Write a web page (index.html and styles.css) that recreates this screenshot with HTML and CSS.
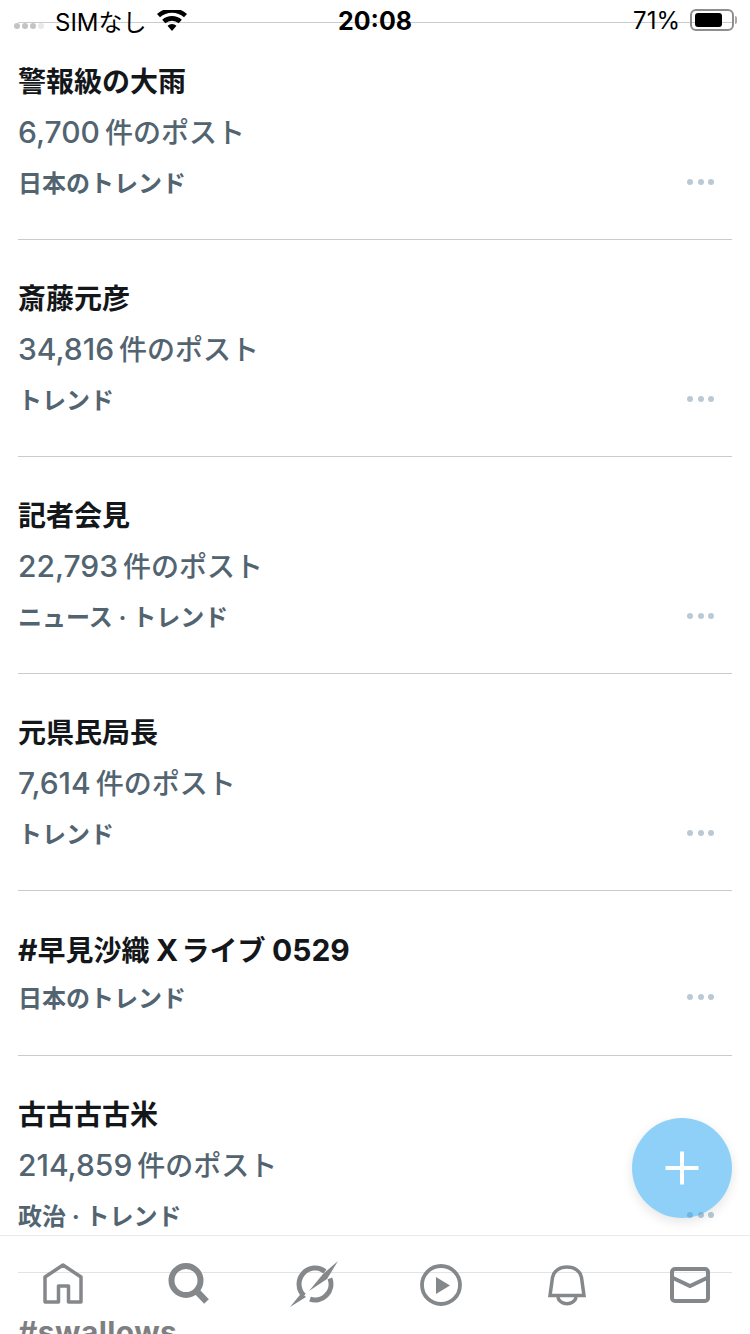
FILE: index.html
```html
<!DOCTYPE html>
<html lang="ja">
<head>
  <meta charset="UTF-8">
  <meta name="viewport" content="width=device-width, initial-scale=1.0">
  <title>トレンド</title>
  <link rel="stylesheet" href="styles.css">
</head>
<body>
  <div class="phone">
    <ul class="trends">
      <li class="trend">
        <div class="trend-title">警報級の大雨</div>
        <div class="trend-count"><span class="num">6,700</span>件のポスト</div>
        <div class="trend-foot"><span class="trend-cat">日本のトレンド</span><span class="dots"><i></i><i></i><i></i></span></div>
      </li>
      <li class="trend">
        <div class="trend-title">斎藤元彦</div>
        <div class="trend-count"><span class="num">34,816</span>件のポスト</div>
        <div class="trend-foot"><span class="trend-cat">トレンド</span><span class="dots"><i></i><i></i><i></i></span></div>
      </li>
      <li class="trend">
        <div class="trend-title">記者会見</div>
        <div class="trend-count"><span class="num">22,793</span>件のポスト</div>
        <div class="trend-foot"><span class="trend-cat">ニュース · トレンド</span><span class="dots"><i></i><i></i><i></i></span></div>
      </li>
      <li class="trend">
        <div class="trend-title">元県民局長</div>
        <div class="trend-count"><span class="num">7,614</span>件のポスト</div>
        <div class="trend-foot"><span class="trend-cat">トレンド</span><span class="dots"><i></i><i></i><i></i></span></div>
      </li>
      <li class="trend trend-short">
        <div class="trend-title"><span class="latin">#</span>早見沙織 <span class="latin tight">X </span>ライブ <span class="latin">0529</span></div>
        <div class="trend-foot"><span class="trend-cat">日本のトレンド</span><span class="dots"><i></i><i></i><i></i></span></div>
      </li>
      <li class="trend">
        <div class="trend-title">古古古古米</div>
        <div class="trend-count"><span class="num">214,859</span>件のポスト</div>
        <div class="trend-foot"><span class="trend-cat">政治 · トレンド</span><span class="dots"><i></i><i></i><i></i></span></div>
      </li>
      <li class="trend">
        <div class="trend-title"><span class="latin wide">#swallows</span></div>
      </li>
    </ul>

    <!-- status bar sits over the list, the divider shows through -->
    <div class="status-bar">
      <div class="status-left">
        <span class="signal"><i></i><i></i><i></i><i></i></span>
        <span class="carrier">SIMなし</span>
        <svg class="wifi" width="30" height="22" viewBox="0 0 30 22"><path d="M15 21 10.500 15.800a6.800 6.800 0 0 1 9 0zM8.300 13.300 5.200 9.800a14.800 14.800 0 0 1 19.600 0l-3.100 3.500a10.200 10.200 0 0 0-13.400 0zM3 7.300 0 3.900a22.800 22.800 0 0 1 30 0l-3 3.400a18.200 18.200 0 0 0-24 0z"/></svg>
      </div>
      <div class="status-time">20:08</div>
      <div class="status-right">
        <span class="battery-pct">71%</span>
        <span class="battery"><span class="battery-fill"></span></span>
        <span class="battery-nub"></span>
      </div>
    </div>

    <button class="fab">
      <svg width="36" height="36" viewBox="0 0 36 36"><path d="M18 1.500v33M1.500 18h33" stroke="#fff" stroke-width="4" fill="none"/></svg>
    </button>

    <nav class="tabbar">
      <svg class="tab-icon tab-home" width="44" height="44" viewBox="0 0 44 44"><path d="M4 40V15L22 3l18 12v25H27.500V24H17.500v16z" fill="none" stroke="#85888b" stroke-width="3.500" stroke-linejoin="round"/></svg>
      <svg class="tab-icon tab-search" width="44" height="44" viewBox="0 0 44 44"><circle cx="19" cy="18.500" r="14.500" fill="none" stroke="#85888b" stroke-width="6"/><path d="M29 28.500 39.500 39.500" stroke="#85888b" stroke-width="6.500" fill="none"/></svg>
      <svg class="tab-icon tab-explore" width="52" height="50" viewBox="0 0 52 50"><path d="M36 11.500A16 16 0 0 0 15 35.600M21 39.200A16 16 0 0 0 40.900 18.300" fill="none" stroke="#85888b" stroke-width="5"/><path d="M49 1 34 14 20 31 38 19z" fill="#85888b"/><path d="M1 47 12.500 33 17 37z" fill="#85888b"/></svg>
      <svg class="tab-icon tab-play" width="44" height="44" viewBox="0 0 44 44"><circle cx="22" cy="23" r="19" fill="none" stroke="#85888b" stroke-width="3.800"/><path d="M17 15 31 23.500 17 32z" fill="#85888b"/></svg>
      <svg class="tab-icon tab-bell" width="44" height="44" viewBox="0 0 44 44"><path d="M5 33.500 7.500 15.500C8.500 9 14.500 5 22 5s13.500 4 14.500 10.500L39 33.500z" fill="none" stroke="#85888b" stroke-width="3.500"/><path d="M12.800 35a9.400 8.500 0 0 0 18.400 0" fill="none" stroke="#85888b" stroke-width="3.500"/></svg>
      <svg class="tab-icon tab-mail" width="44" height="44" viewBox="0 0 44 44"><rect x="4" y="7" width="36" height="32" rx="3" fill="none" stroke="#85888b" stroke-width="4"/><path d="M4 15.500 22 24l18-8.500" fill="none" stroke="#85888b" stroke-width="4"/></svg>
    </nav>
  </div>
</body>
</html>
```

FILE: styles.css
```css
* {
  box-sizing: border-box;
}

body {
  margin: 0;
  background: #ffffff;
  font-family: "Inter", "Noto Sans CJK JP", sans-serif;
}

.phone {
  position: relative;
  width: 750px;
  height: 1334px;
  overflow: hidden;
  background: #ffffff;
}

/* trend list */
.trends {
  list-style: none;
  margin: 0;
  padding: 0 18px;
}

.trends::before {
  content: "";
  display: block;
  height: 22px;
  border-bottom: 1px solid #c8cccf;
}

.trend {
  height: 217px;
  padding-top: 39px;
  border-bottom: 1px solid #c8cccf;
}

.trend-short {
  height: 165px;
}

.trend-title {
  font-size: 28px;
  font-weight: 700;
  line-height: 40px;
  color: #14171a;
}

.latin {
  font-size: 30px;
}

.tight {
  word-spacing: -4px;
}

.wide {
  letter-spacing: 0.4px;
}

.trend-count {
  margin-top: 10px;
  font-size: 28px;
  font-weight: 500;
  line-height: 40px;
  color: #536471;
}

.num {
  margin-right: 5px;
  font-size: 30px;
}

.trend-foot {
  display: flex;
  align-items: center;
  justify-content: space-between;
  margin-top: 8px;
  height: 40px;
  padding-right: 18px;
}

.trend-short .trend-foot {
  margin-top: 5px;
}

.trend-cat {
  font-size: 24px;
  font-weight: 700;
  color: #536471;
}

.dots {
  display: flex;
  gap: 4.500px;
  margin-top: 2px;
}

.dots i {
  width: 6px;
  height: 6px;
  border-radius: 50%;
  background: #b9cad6;
}

/* status bar */
.status-bar {
  position: absolute;
  top: 0;
  left: 0;
  width: 750px;
  height: 40px;
  display: grid;
  grid-template-columns: 1fr auto 1fr;
  align-items: center;
  font-size: 24px;
  color: #000000;
}

.status-left {
  display: flex;
  align-items: center;
  padding-left: 14px;
}

.signal {
  display: flex;
  gap: 2px;
  margin-top: 12px;
  width: 41px;
}

.signal i {
  width: 6px;
  height: 6px;
  border-radius: 50%;
  background: #c4c4c4;
}

.signal i:last-child {
  background: #e8e8e8;
}

.carrier {
  width: 102px;
}

.wifi {
  fill: #000000;
  margin-top: 2px;
}

.status-time {
  margin-top: 2px;
  font-weight: 700;
  font-size: 25px;
}

.status-right {
  display: flex;
  align-items: center;
  justify-content: flex-end;
  padding-right: 13px;
}

.battery-pct {
  margin-right: 10px;
}

.battery {
  display: flex;
  align-items: center;
  width: 44px;
  height: 22px;
  padding: 3px;
  border: 2px solid #8e8e8e;
  border-radius: 6px;
}

.battery-fill {
  width: 27px;
  height: 14px;
  border-radius: 3px;
  background: #000000;
}

.battery-nub {
  width: 2px;
  height: 8px;
  margin-left: 1px;
  border-radius: 0 2px 2px 0;
  background: #a8a8a8;
}

/* compose button */
.fab {
  position: absolute;
  left: 632px;
  top: 1118px;
  width: 100px;
  height: 100px;
  display: flex;
  align-items: center;
  justify-content: center;
  padding: 0;
  border: 0;
  border-radius: 50%;
  background: rgba(29, 161, 242, 0.5);
  box-shadow: 0 4px 12px rgba(0, 0, 0, 0.1);
}

/* tab bar */
.tabbar {
  position: absolute;
  left: 0;
  bottom: 0;
  width: 750px;
  height: 99px;
  display: grid;
  grid-template-columns: repeat(6, 1fr);
  justify-items: center;
  align-items: start;
  padding-top: 26px;
  background: rgba(255, 255, 255, 0.45);
  border-top: 1px solid #e8e9ea;
}

.tab-home { margin-left: 1px; }
.tab-search { margin-left: 2px; }
.tab-explore { margin-left: 5px; margin-top: -2px; }
.tab-play { margin-left: 7px; }
.tab-bell { margin-left: 9px; }
.tab-mail { margin-left: 5px; }
```
